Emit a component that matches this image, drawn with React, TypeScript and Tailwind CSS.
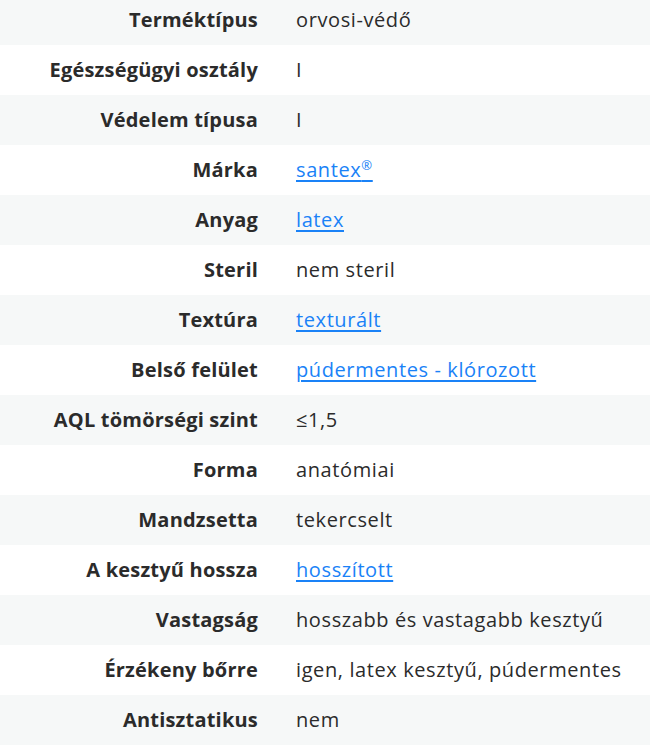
const rows: { label: string; value: string; link?: boolean; reg?: boolean }[] = [
  { label: 'Terméktípus', value: 'orvosi-védő' },
  { label: 'Egészségügyi osztály', value: 'I' },
  { label: 'Védelem típusa', value: 'I' },
  { label: 'Márka', value: 'santex', link: true, reg: true },
  { label: 'Anyag', value: 'latex', link: true },
  { label: 'Steril', value: 'nem steril' },
  { label: 'Textúra', value: 'texturált', link: true },
  { label: 'Belső felület', value: 'púdermentes - klórozott', link: true },
  { label: 'AQL tömörségi szint', value: '≤1,5' },
  { label: 'Forma', value: 'anatómiai' },
  { label: 'Mandzsetta', value: 'tekercselt' },
  { label: 'A kesztyű hossza', value: 'hosszított', link: true },
  { label: 'Vastagság', value: 'hosszabb és vastagabb kesztyű' },
  { label: 'Érzékeny bőrre', value: 'igen, latex kesztyű, púdermentes' },
  { label: 'Antisztatikus', value: 'nem' },
];

export default function App() {
  return (
    <div className="w-[650px] h-[745px] overflow-hidden bg-white font-['Open_Sans','Lato',sans-serif] text-[20px] text-[#2b2b2b]">
      <div className="-mt-[5px]">
        {rows.map((r, i) => (
          <div
            key={r.label}
            className={`grid grid-cols-[277px_1fr] h-[50px] items-center ${i % 2 === 0 ? 'bg-[#f6f8f8]' : 'bg-white'}`}
          >
            <div className="text-right pr-[19px] font-bold tracking-[0.2px] whitespace-nowrap">{r.label}</div>
            <div className="pl-[19px] tracking-[0.6px] whitespace-nowrap">
              {r.link ? (
                <a href="#" className="text-[#1a82f7] underline underline-offset-[3px] decoration-[1.5px]">
                  {r.value}
                  {r.reg && <span className="text-[13px] relative -top-[7px]">®</span>}
                </a>
              ) : (
                r.value
              )}
            </div>
          </div>
        ))}
      </div>
    </div>
  );
}
